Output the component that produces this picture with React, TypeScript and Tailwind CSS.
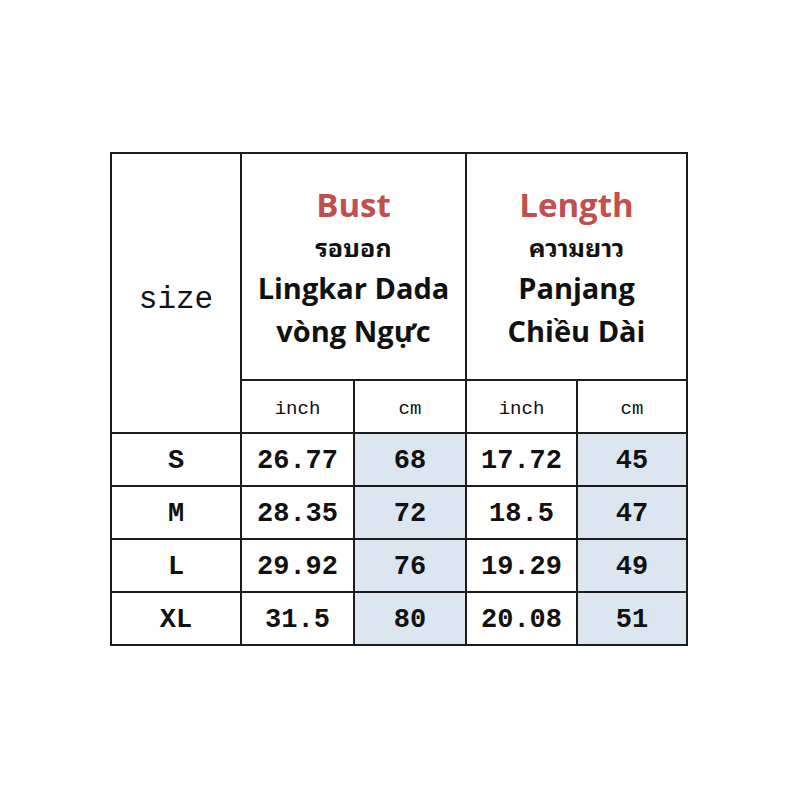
import React from "react";

const rows = [
  { size: "S", bi: "26.77", bc: "68", li: "17.72", lc: "45" },
  { size: "M", bi: "28.35", bc: "72", li: "18.5", lc: "47" },
  { size: "L", bi: "29.92", bc: "76", li: "19.29", lc: "49" },
  { size: "XL", bi: "31.5", bc: "80", li: "20.08", lc: "51" },
];

const mono = "font-['Liberation_Mono',monospace]";
const sans = "font-['Open_Sans','Noto_Sans',sans-serif]";
const thaiFont = "font-['Noto_Sans_Thai_Looped','Noto_Sans_Thai','Open_Sans',sans-serif]";

function HeadCell({ title, thai, line1, line2 }: { title: string; thai: string; line1: string; line2: string }) {
  return (
    <div className={`col-span-2 bg-white flex flex-col items-center pt-[31px] font-bold text-[#111] ${sans}`}>
      <div className="text-[33px] leading-[40px] text-[#c0504d]">{title}</div>
      <div className={`text-[25px] leading-[42px] ${thaiFont}`}>{thai}</div>
      <div className="text-[29px] leading-[42px]">{line1}</div>
      <div className="text-[29px] leading-[44px]">{line2}</div>
    </div>
  );
}

export default function App() {
  return (
    <main className="w-[800px] h-[800px] bg-white pt-[152px] pl-[110px]">
      <div className="grid w-[578px] grid-cols-[128px_111px_110px_109px_108px] grid-rows-[225px_51px_51px_51px_51px_51px] gap-[2px] bg-[#1c1c1c] p-[2px]">
        <div className={`row-span-2 bg-white flex items-center justify-center pt-[14px] text-[31px] text-[#111] ${mono}`}>
          size
        </div>
        <HeadCell title="Bust" thai="รอบอก" line1="Lingkar Dada" line2="vòng Ngực" />
        <HeadCell title="Length" thai="ความยาว" line1="Panjang" line2="Chiều Dài" />
        {["inch", "cm", "inch", "cm"].map((u, i) => (
          <div key={i} className={`bg-white flex items-center justify-center pt-[6px] text-[19px] text-[#111] ${mono}`}>
            {u}
          </div>
        ))}
        {rows.map((r) => (
          <React.Fragment key={r.size}>
            {[r.size, r.bi, r.bc, r.li, r.lc].map((v, i) => (
              <div
                key={i}
                className={`flex items-center justify-center pt-[3px] text-[27px] font-bold text-[#111] ${mono} ${
                  i === 2 || i === 4 ? "bg-[#dce6f1]" : "bg-white"
                }`}
              >
                {v}
              </div>
            ))}
          </React.Fragment>
        ))}
      </div>
    </main>
  );
}
